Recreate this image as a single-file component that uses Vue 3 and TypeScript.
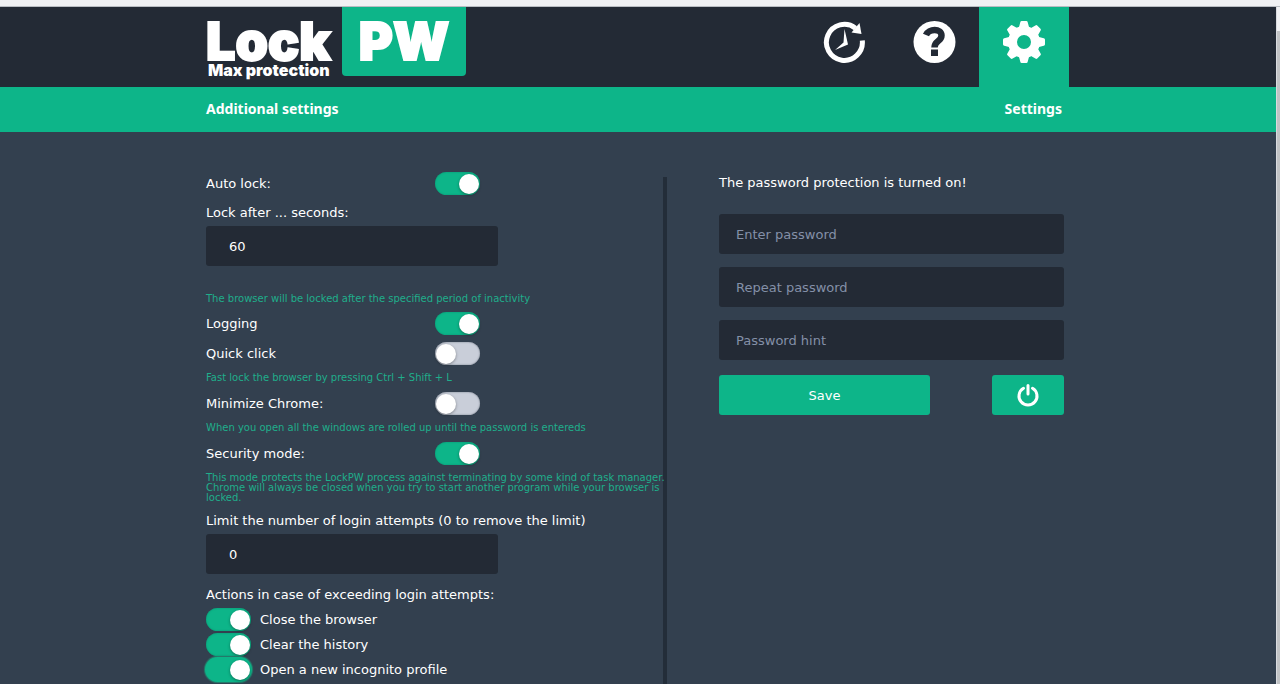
<script setup lang="ts">
import { reactive, ref } from 'vue'

interface Toggle {
  id: string
  label: string
  hint?: string
  on: boolean
}

const autoLock = ref(true)
const lockAfter = ref('60')
const attempts = ref('0')

const modes = reactive<Toggle[]>([
  { id: 'logging', label: 'Logging', on: true },
  { id: 'quick', label: 'Quick click', hint: 'Fast lock the browser by pressing Ctrl + Shift + L', on: false },
  {
    id: 'minimize',
    label: 'Minimize Chrome:',
    hint: 'When you open all the windows are rolled up until the password is entereds',
    on: false,
  },
  {
    id: 'security',
    label: 'Security mode:',
    hint: 'This mode protects the LockPW process against terminating by some kind of task manager. Chrome will always be closed when you try to start another program while your browser is locked.',
    on: true,
  },
])

const actions = reactive<Toggle[]>([
  { id: 'close', label: 'Close the browser', on: true },
  { id: 'clear', label: 'Clear the history', on: true },
  { id: 'incognito', label: 'Open a new incognito profile', on: true },
])

const fields = reactive([
  { id: 'pw', label: 'Enter password', type: 'password', value: '' },
  { id: 'pw2', label: 'Repeat password', type: 'password', value: '' },
  { id: 'hint', label: 'Password hint', type: 'text', value: '' },
])

const teeth = [0, 45, 90, 135, 180, 225, 270, 315]
</script>

<template>
  <div class="window">
    <div class="chrome"></div>
    <div class="view">
      <div class="page">
        <header class="header">
          <div class="wrap header-row">
            <a class="logo" href="#">
              <span class="logo-left">
                <span class="logo-lock">Lock</span>
                <span class="logo-sub">Max protection</span>
              </span>
              <span class="logo-pw">PW</span>
            </a>
            <nav class="nav">
              <a class="tab" href="#" aria-label="History">
                <svg width="44" height="44" viewBox="0 0 44 44">
                  <path d="M40.3 20.5A18 18 0 1 1 33.500 8.2" fill="none" stroke="#fff" stroke-width="5" />
                  <path d="M37.500 3L39.500 14L29.500 12.500Z" fill="#fff" />
                  <path d="M22.500 9L26 24.500L13 30L21.500 22.500Z" fill="#fff" />
                </svg>
              </a>
              <a class="tab" href="#" aria-label="Help">
                <svg width="44" height="44" viewBox="0 0 44 44">
                  <circle cx="22.500" cy="22" r="21" fill="#fff" />
                  <path d="M14 15C16.500 8.500 29.500 8 29.500 15.5C29.500 21.500 22.500 20.500 22.500 27.500" fill="none" stroke="#232a35" stroke-width="6.500" />
                  <rect x="19" y="29.500" width="7" height="6.500" fill="#232a35" />
                </svg>
              </a>
              <a class="tab active" href="#" aria-label="Settings">
                <svg width="44" height="44" viewBox="0 0 44 44">
                  <circle cx="22" cy="22" r="11.500" fill="none" stroke="#fff" stroke-width="9" />
                  <path
                    v-for="a in teeth"
                    :key="a"
                    d="M16.500 9L18.300 2.200Q18.500 1 19.700 1H24.300Q25.500 1 25.700 2.200L27.500 9Z"
                    :transform="`rotate(${a} 22 22)`"
                    fill="#fff"
                  />
                </svg>
              </a>
            </nav>
          </div>
        </header>

        <div class="bar">
          <div class="wrap bar-row">
            <span>Additional settings</span>
            <span>Settings</span>
          </div>
        </div>

        <main class="wrap content">
          <section class="options">
            <div class="row">
              <label for="auto">Auto lock:</label>
              <input id="auto" v-model="autoLock" class="switch" type="checkbox" />
            </div>
            <label class="field-label first" for="after">Lock after ... seconds:</label>
            <input id="after" v-model="lockAfter" class="box number" type="text" />
            <p class="hint spaced">The browser will be locked after the specified period of inactivity</p>

            <template v-for="m in modes" :key="m.id">
              <div class="row">
                <label :for="m.id">{{ m.label }}</label>
                <input :id="m.id" v-model="m.on" class="switch" type="checkbox" />
              </div>
              <p v-if="m.hint" class="hint">{{ m.hint }}</p>
            </template>

            <label class="field-label" for="attempts">Limit the number of login attempts (0 to remove the limit)</label>
            <input id="attempts" v-model="attempts" class="box number" type="text" />

            <fieldset class="actions">
              <legend>Actions in case of exceeding login attempts:</legend>
              <div v-for="(a, i) in actions" :key="a.id" class="action">
                <input :id="a.id" v-model="a.on" class="switch" :class="{ halo: i === 2 }" type="checkbox" />
                <label :for="a.id">{{ a.label }}</label>
              </div>
            </fieldset>
          </section>

          <form class="password" @submit.prevent>
            <p class="status">The password protection is turned on!</p>
            <input
              v-for="f in fields"
              :key="f.id"
              v-model="f.value"
              class="box"
              :type="f.type"
              :placeholder="f.label"
              :aria-label="f.label"
            />
            <div class="buttons">
              <button class="btn save" type="submit">Save</button>
              <button class="btn power" type="button" aria-label="Turn off">
                <svg width="24" height="24" viewBox="0 0 24 24" fill="none" stroke="#fff" stroke-width="3" stroke-linecap="round">
                  <path d="M7.500 5.200A9 9 0 1 0 16.500 5.200M12 2.500V11" />
                </svg>
              </button>
            </div>
          </form>
        </main>
      </div>
      <div class="scroll"><div class="thumb"></div></div>
    </div>
  </div>
</template>

<style>
body {
  margin: 0;
  background: #33404f;
}
</style>

<style scoped>
* {
  box-sizing: border-box;
}
.window {
  display: flex;
  flex-direction: column;
  min-height: 100vh;
  font-family: Verdana, "DejaVu Sans", sans-serif;
  font-size: 13px;
  color: #fff;
}
.chrome {
  height: 7px;
  background: #f0f1f3;
  border-bottom: 1px solid #b9bdc2;
}
.view {
  flex: 1;
  display: flex;
}
.page {
  flex: 1;
  display: flex;
  flex-direction: column;
  background: #33404f;
}
.scroll {
  width: 4px;
  padding-top: 24px;
  background: #f0f1f3;
  border-left: 1px solid #d9dbe0;
  display: flex;
}
.thumb {
  flex: 1;
  background: #c1c3c5;
}
.wrap {
  width: 100%;
  max-width: 864px;
  margin: 0 auto;
}
.header {
  background: #232a35;
}
.header-row {
  display: flex;
  justify-content: space-between;
  height: 80px;
  padding-right: 1px;
}
.logo {
  display: flex;
  gap: 8px;
  color: #fff;
  text-decoration: none;
  font-family: Inter, sans-serif;
  font-weight: 900;
}
.logo-left {
  display: flex;
  flex-direction: column;
  width: 128px;
  padding-top: 12px;
}
.logo-lock {
  font-size: 52px;
  line-height: 46px;
  -webkit-text-stroke: 2px #fff;
}
.logo-sub {
  padding-left: 2px;
  font-size: 16px;
  line-height: 10px;
  white-space: nowrap;
}
.logo-pw {
  width: 124px;
  height: 69px;
  border-radius: 0 0 4px 4px;
  background: #0db589;
  text-align: center;
  font-size: 52px;
  line-height: 70px;
  -webkit-text-stroke: 2px #fff;
}
.nav {
  display: flex;
}
.tab {
  width: 90px;
  padding-top: 13px;
  text-align: center;
}
.tab svg {
  display: block;
  margin: 0 auto;
}
.tab.active {
  background: #0db589;
}
.bar {
  background: #0db589;
}
.bar-row {
  display: flex;
  justify-content: space-between;
  padding: 0 8px 2px 0;
  font-family: Verdana, "Noto Sans", sans-serif;
  font-size: 14px;
  font-weight: bold;
  line-height: 43px;
}
.content {
  flex: 1;
  display: grid;
  grid-template-columns: 1fr 403px;
}
.options {
  padding: 36px 4px 0 0;
  background: linear-gradient(#232d39, #232d39) no-repeat right 45px / 4px 100%;
}
.row {
  display: flex;
  align-items: center;
  height: 30px;
}
.row label {
  width: 229px;
}
.switch {
  appearance: none;
  display: block;
  flex: none;
  width: 45px;
  height: 23px;
  margin: 0;
  padding: 2px 1px;
  border-radius: 12px;
  background: #c9ced9;
  box-shadow: inset 0 0 2px #6d7582;
}
.switch::before {
  content: "";
  display: block;
  width: 20px;
  height: 20px;
  border-radius: 10px;
  background: #fff;
  box-shadow: 0 1px 3px #00000060;
}
.switch:checked {
  background: #0db589;
  box-shadow: inset 0 0 2px #0a8f6c;
}
.switch:checked::before {
  margin-left: auto;
}
.switch.halo {
  box-shadow: 0 0 0 1px #0db589, 0 0 1px 2px #23806d;
}
.field-label {
  display: block;
  line-height: 26px;
}
.field-label.first {
  margin-top: 2px;
}
.box {
  display: block;
  width: 100%;
  height: 40px;
  padding: 0 17px;
  border: 0;
  border-radius: 3px;
  background: #232a35;
  color: #fff;
  font: inherit;
}
.box::placeholder {
  color: #8490a8;
  opacity: 1;
}
.box.number {
  max-width: 292px;
  padding: 0 23px;
}
.hint {
  margin: 5px -6px 5px 0;
  font-size: 10px;
  line-height: 10px;
  color: #1fae8b;
}
.hint.spaced {
  margin: 28px 0 4px;
}
.actions {
  margin: 8px 0 0;
  padding: 0;
  border: 0;
}
.actions legend {
  padding: 0;
  line-height: 25px;
}
.action {
  display: flex;
  align-items: center;
  gap: 9px;
  height: 25px;
}
.password {
  display: flex;
  flex-direction: column;
  gap: 13px;
  padding: 36px 6px 0 52px;
}
.status {
  margin: 0 0 3px;
  line-height: 30px;
}
.buttons {
  display: flex;
  justify-content: space-between;
  margin-top: 2px;
}
.btn {
  display: flex;
  align-items: center;
  justify-content: center;
  height: 40px;
  padding: 0;
  border: 0;
  border-radius: 3px;
  background: #0db589;
  color: #fff;
  font: inherit;
}
.save {
  width: 211px;
}
.power {
  width: 72px;
}
</style>
